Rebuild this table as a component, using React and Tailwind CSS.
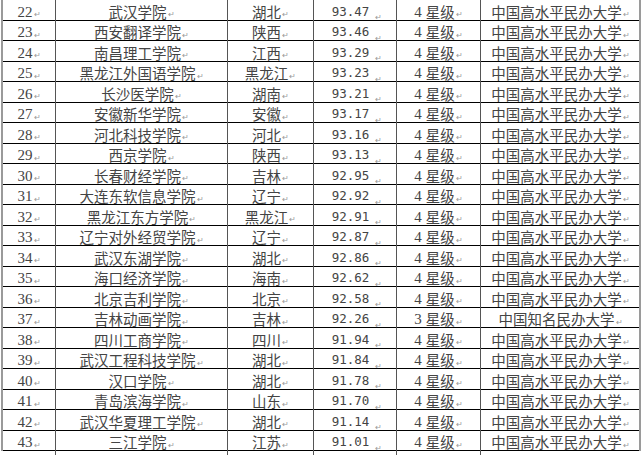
import React from 'react';

const rows = [
  ['22', '武汉学院', '湖北', '93.47', '4', '中国高水平民办大学'],
  ['23', '西安翻译学院', '陕西', '93.46', '4', '中国高水平民办大学'],
  ['24', '南昌理工学院', '江西', '93.29', '4', '中国高水平民办大学'],
  ['25', '黑龙江外国语学院', '黑龙江', '93.23', '4', '中国高水平民办大学'],
  ['26', '长沙医学院', '湖南', '93.21', '4', '中国高水平民办大学'],
  ['27', '安徽新华学院', '安徽', '93.17', '4', '中国高水平民办大学'],
  ['28', '河北科技学院', '河北', '93.16', '4', '中国高水平民办大学'],
  ['29', '西京学院', '陕西', '93.13', '4', '中国高水平民办大学'],
  ['30', '长春财经学院', '吉林', '92.95', '4', '中国高水平民办大学'],
  ['31', '大连东软信息学院', '辽宁', '92.92', '4', '中国高水平民办大学'],
  ['32', '黑龙江东方学院', '黑龙江', '92.91', '4', '中国高水平民办大学'],
  ['33', '辽宁对外经贸学院', '辽宁', '92.87', '4', '中国高水平民办大学'],
  ['34', '武汉东湖学院', '湖北', '92.86', '4', '中国高水平民办大学'],
  ['35', '海口经济学院', '海南', '92.62', '4', '中国高水平民办大学'],
  ['36', '北京吉利学院', '北京', '92.58', '4', '中国高水平民办大学'],
  ['37', '吉林动画学院', '吉林', '92.26', '3', '中国知名民办大学'],
  ['38', '四川工商学院', '四川', '91.94', '4', '中国高水平民办大学'],
  ['39', '武汉工程科技学院', '湖北', '91.84', '4', '中国高水平民办大学'],
  ['40', '汉口学院', '湖北', '91.78', '4', '中国高水平民办大学'],
  ['41', '青岛滨海学院', '山东', '91.70', '4', '中国高水平民办大学'],
  ['42', '武汉华夏理工学院', '湖北', '91.14', '4', '中国高水平民办大学'],
  ['43', '三江学院', '江苏', '91.01', '4', '中国高水平民办大学'],
];

function Mark() {
  return <span className="text-[8px] text-[#999] ml-[1px] relative top-[2px]">↵</span>;
}

function Cell({ children, last }) {
  return (
    <div className={`flex items-center justify-center h-full text-[#444] ${last ? '' : 'border-r border-[#555]'}`}>
      {children}
    </div>
  );
}

export default function App() {
  return (
    <div className="w-[641px] h-[455px] bg-white overflow-hidden">
      <div className="ml-[1px] w-[640px] border-l-2 border-r-2 border-[#9a9a9a]">
        {rows.map(r => (
          <div key={r[0]} className="grid grid-cols-[53px_172px_86px_83px_84px_157px] h-[20.5px] border-b border-black">
            <Cell>
              <span className="text-[15px] leading-none font-['Liberation_Serif',serif]">{r[0]}</span><Mark />
            </Cell>
            <Cell>
              <span className="text-[14.5px] leading-none font-['Noto_Sans_CJK_SC',sans-serif]">{r[1]}</span><Mark />
            </Cell>
            <Cell>
              <span className="text-[14.5px] leading-none font-['Noto_Sans_CJK_SC',sans-serif]">{r[2]}</span><Mark />
            </Cell>
            <Cell>
              <span className="text-[12.5px] leading-none pl-[4px] font-['DejaVu_Sans_Mono',monospace]">{r[3]}</span>
              <span className="ml-[5px]"><Mark /></span>
            </Cell>
            <Cell>
              <span className="text-[15px] leading-none font-['Liberation_Serif',serif]">{r[4]}</span>
              <span className="text-[14.5px] leading-none ml-[4px] font-['Noto_Sans_CJK_SC',sans-serif]">星级</span><Mark />
            </Cell>
            <Cell last>
              <span className="text-[14.5px] leading-none pl-[2px] font-['Noto_Sans_CJK_SC',sans-serif]">{r[5]}</span><Mark />
            </Cell>
          </div>
        ))}
      </div>
    </div>
  );
}
